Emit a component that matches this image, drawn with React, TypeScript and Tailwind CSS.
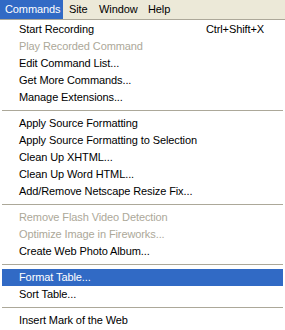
type Item =
  | { kind: "item"; label: string; shortcut?: string; disabled?: boolean; active?: boolean }
  | { kind: "sep" }

const items: Item[] = [
  { kind: "item", label: "Start Recording", shortcut: "Ctrl+Shift+X" },
  { kind: "item", label: "Play Recorded Command", disabled: true },
  { kind: "item", label: "Edit Command List..." },
  { kind: "item", label: "Get More Commands..." },
  { kind: "item", label: "Manage Extensions..." },
  { kind: "sep" },
  { kind: "item", label: "Apply Source Formatting" },
  { kind: "item", label: "Apply Source Formatting to Selection" },
  { kind: "item", label: "Clean Up XHTML..." },
  { kind: "item", label: "Clean Up Word HTML..." },
  { kind: "item", label: "Add/Remove Netscape Resize Fix..." },
  { kind: "sep" },
  { kind: "item", label: "Remove Flash Video Detection", disabled: true },
  { kind: "item", label: "Optimize Image in Fireworks...", disabled: true },
  { kind: "item", label: "Create Web Photo Album..." },
  { kind: "sep" },
  { kind: "item", label: "Format Table...", active: true },
  { kind: "item", label: "Sort Table..." },
  { kind: "sep" },
  { kind: "item", label: "Insert Mark of the Web" },
]

export default function App() {
  return (
    <div
      className="h-[330px] w-[285px] overflow-hidden bg-white text-[11px] leading-none tracking-[-0.1px] text-black"
      style={{ fontFamily: '"Liberation Sans", Arial, sans-serif' }}
    >
      {/* menu bar */}
      <div className="flex h-[19px] bg-[#ece9d8]">
        <div className="flex w-[63px] items-center bg-[#316ac5] pl-[5px] text-white">Commands</div>
        <div className="flex w-[30px] items-center pl-[6px]">Site</div>
        <div className="flex w-[49px] items-center pl-[6px]">Window</div>
        <div className="flex w-[36px] items-center pl-[6px]">Help</div>
      </div>

      {/* dropdown */}
      <div className="border-t border-[#aca899] px-[2px] pt-[1px]">
        {items.map((it, i) =>
          it.kind === "sep" ? (
            <div key={i} className="flex h-[9px] items-center">
              <div className="h-px w-full bg-[#aca899]" />
            </div>
          ) : (
            <div
              key={i}
              className={`flex h-[17px] items-center justify-between pl-[17px] pr-[19px] ${
                it.active ? "bg-[#316ac5] text-white" : it.disabled ? "text-[#aca899]" : ""
              }`}
            >
              <span>{it.label}</span>
              {it.shortcut ? <span>{it.shortcut}</span> : null}
            </div>
          )
        )}
      </div>
    </div>
  )
}
